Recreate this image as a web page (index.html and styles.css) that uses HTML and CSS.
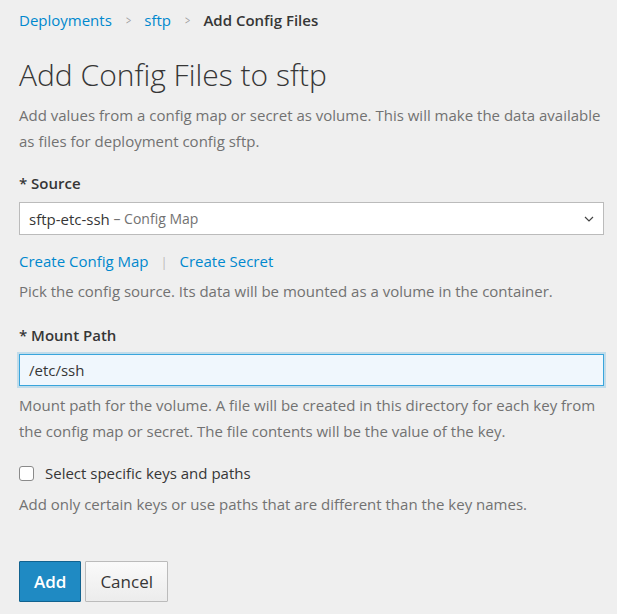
FILE: index.html
```html
<!DOCTYPE html>
<html>
<head>
<meta charset="utf-8">
<link rel="stylesheet" href="styles.css">
</head>
<body>
<div class="page">
  <nav class="crumbs">
    <a class="link" href="#">Deployments</a>
    <span class="sep">&gt;</span>
    <a class="link" href="#">sftp</a>
    <span class="sep">&gt;</span>
    <span class="current">Add Config Files</span>
  </nav>
  <h1 class="title">Add Config Files to sftp</h1>
  <p class="help intro">Add values from a config map or secret as volume. This will make the data available as files for deployment config sftp.</p>

  <div class="group">
    <label class="label">* Source</label>
    <div class="select">
      <span class="select-main">sftp-etc-ssh</span><span class="select-sub">&nbsp;– Config Map</span>
      <svg class="caret" width="10" height="6" viewBox="0 0 10 6"><path d="M1 1 L5 5 L9 1" fill="none" stroke="#444" stroke-width="1.2"/></svg>
    </div>
    <div class="links">
      <a class="link" href="#">Create Config Map</a>
      <span class="bar">|</span>
      <a class="link" href="#">Create Secret</a>
    </div>
    <p class="help links-help">Pick the config source. Its data will be mounted as a volume in the container.</p>
  </div>

  <div class="group group2">
    <label class="label">* Mount Path</label>
    <div class="input">/etc/ssh</div>
    <p class="help">Mount path for the volume. A file will be created in this directory for each key from the config map or secret. The file contents will be the value of the key.</p>
  </div>

  <div class="check-row">
    <span class="checkbox"></span>
    <span class="check-label">Select specific keys and paths</span>
  </div>
  <p class="help">Add only certain keys or use paths that are different than the key names.</p>

  <div class="buttons">
    <button class="btn btn-primary">Add</button>
    <button class="btn btn-default">Cancel</button>
  </div>
</div>
</body>
</html>
```
FILE: styles.css
```css
html, body {
  margin: 0;
  padding: 0;
  background: #efefef;
}
body {
  font-family: "Open Sans", "Noto Sans", sans-serif;
  color: #363636;
  font-size: 15px;
}
.page {
  padding: 8px 13px 0 19px;
}
.crumbs {
  display: flex;
  align-items: center;
  height: 24px;
  font-size: 15px;
}
.link {
  color: #0088ce;
  text-decoration: none;
}
.sep {
  color: #9c9c9c;
  font-size: 13px;
  margin: 0 12px 0 13px;
  transform: scaleX(0.7);
}
.current {
  font-weight: 600;
  color: #363636;
}
.title {
  font-weight: 300;
  font-size: 30px;
  line-height: 36px;
  margin: 25px 0 0 0;
  color: #363636;
}
.help {
  color: #727272;
  font-size: 15px;
  line-height: 26px;
  margin: 0;
}
.intro {
  margin-top: 9px;
}
.group {
  margin-top: 17px;
}
.group2 {
  margin-top: 19px;
}
.label {
  display: block;
  font-weight: 600;
  font-size: 15px;
  line-height: 24px;
  margin-bottom: 7px;
}
.select {
  display: flex;
  align-items: center;
  height: 31px;
  border: 1px solid #bbb;
  background: #fff;
  padding: 0 9px 0 9px;
  font-size: 15px;
}
.select-main {
  color: #363636;
}
.select-sub {
  color: #727272;
  font-size: 14px;
}
.caret {
  margin-left: auto;
}
.links {
  margin-top: 13px;
  line-height: 26px;
  font-size: 15px;
}
.bar {
  color: #bbb;
  margin: 0 8px;
  font-size: 13px;
}
.links-help {
  margin-top: 3px;
}
.input {
  height: 30px;
  line-height: 30px;
  border: 1px solid #39a5dc;
  background: #f0f7fd;
  box-shadow: 0 0 0 2px rgba(57,165,220,0.25);
  padding: 0 9px;
  font-size: 15px;
  color: #363636;
  margin-bottom: 6px;
}
.check-row {
  display: flex;
  align-items: center;
  margin-top: 17px;
  height: 24px;
}
.checkbox {
  width: 13px;
  height: 13px;
  border: 1px solid #8a8a8a;
  border-radius: 3px;
  background: #fff;
  margin-right: 11px;
}
.check-label {
  font-size: 15px;
}
.check-row + .help {
  margin-top: 6px;
}
.buttons {
  display: flex;
  gap: 4px;
  margin-top: 44px;
}
.btn {
  font-family: "Open Sans", "Noto Sans", sans-serif;
  font-size: 17px;
  height: 41px;
  padding: 0 14px;
  border-radius: 1px;
  cursor: pointer;
}
.btn-primary {
  background: #1f8ac3;
  border: 1px solid #11628f;
  color: #fff;
  font-weight: 600;
}
.btn-default {
  background: linear-gradient(#fafafa, #ececec);
  border: 1px solid #bbb;
  color: #363636;
}
```
